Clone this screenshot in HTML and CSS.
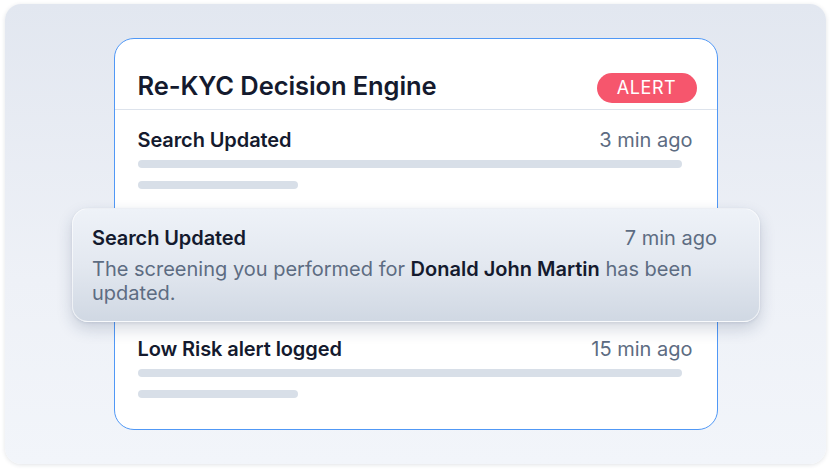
FILE: index.html
```html
<!DOCTYPE html>
<html lang="en">
<head>
<meta charset="utf-8">
<title>Re-KYC Decision Engine</title>
<link rel="stylesheet" href="styles.css">
</head>
<body>
<div class="panel">
  <div class="stage">
    <div class="card">
      <div class="card-header">
        <h1 class="card-title">Re-KYC Decision Engine</h1>
        <span class="badge">ALERT</span>
      </div>
      <div class="rows">
        <div class="row">
          <div class="row-top">
            <span class="row-title">Search Updated</span>
            <span class="row-time">3 min ago</span>
          </div>
          <div class="bar bar-long"></div>
          <div class="bar bar-short"></div>
        </div>
        <div class="row row-placeholder" aria-hidden="true">
          <div class="bar bar-long"></div>
          <div class="bar bar-short"></div>
        </div>
        <div class="row">
          <div class="row-top">
            <span class="row-title">Low Risk alert logged</span>
            <span class="row-time">15 min ago</span>
          </div>
          <div class="bar bar-long"></div>
          <div class="bar bar-short"></div>
        </div>
      </div>
    </div>
    <div class="toast">
      <div class="row-top">
        <span class="row-title">Search Updated</span>
        <span class="row-time">7 min ago</span>
      </div>
      <p class="toast-body">The screening you performed for <strong>Donald John Martin</strong> has been updated.</p>
    </div>
  </div>
</div>
</body>
</html>
```
FILE: styles.css
```css
* { box-sizing: border-box; }
html, body { margin: 0; padding: 0; background: #ffffff; }
body {
  font-family: Inter, "Noto Sans", "Liberation Sans", sans-serif;
  color: #141a2e;
  width: 832px;
  height: 472px;
  overflow: hidden;
}
.panel {
  margin: 4px 6px 0 5px;
  height: 460px;
  border-radius: 16px;
  background: linear-gradient(180deg, #e2e7f0 0%, #eef1f7 60%, #f2f5fa 100%);
  box-shadow: 0 1px 4px rgba(40, 55, 80, 0.14);
  padding-top: 34px;
}
.stage {
  position: relative;
  width: 604px;
  margin-left: 109px;
}
.card {
  background: #ffffff;
  border: 1.5px solid #5098f6;
  border-radius: 20px;
  height: 392px;
  overflow: hidden;
}
.card-header {
  height: 71px;
  display: flex;
  align-items: flex-end;
  justify-content: space-between;
  padding: 0 20.5px 6.5px 22.5px;
  border-bottom: 1px solid #dde3ec;
}
.card-title {
  margin: 0 0 2px;
  font-size: 25.5px;
  line-height: 30px;
  font-weight: 600;
  letter-spacing: -0.1px;
  color: #141a2e;
}
.badge {
  width: 100px;
  height: 30px;
  border-radius: 15px;
  background: #f6566d;
  color: #ffffff;
  font-size: 18px;
  font-weight: 400;
  letter-spacing: 0.6px;
  display: flex;
  align-items: center;
  justify-content: center;
}
.rows {
  display: flex;
  flex-direction: column;
  gap: 43px;
  padding: 17.5px 24.5px 0 22.5px;
}
.row-placeholder { padding-top: 32px; }
.row-top {
  display: flex;
  justify-content: space-between;
  align-items: center;
  height: 24px;
  margin-bottom: 8px;
}
.row-title {
  font-size: 20px;
  font-weight: 600;
  letter-spacing: -0.1px;
  color: #141a2e;
}
.row-time {
  font-size: 20px;
  font-weight: 400;
  color: #5d6c82;
}
.bar {
  height: 8.5px;
  border-radius: 4.25px;
  background: #d8dfe8;
}
.bar-long { width: 544px; margin-bottom: 12.5px; }
.bar-short { width: 160px; }
.toast {
  position: absolute;
  left: -42px;
  top: 170px;
  width: 688px;
  height: 114px;
  border-radius: 16px;
  padding: 17px 42px 0 19px;
  background: linear-gradient(180deg, #eef2f8 0%, #e3e8f0 50%, #d0d8e3 100%);
  border: 1px solid rgba(255, 255, 255, 0.6);
  box-shadow: 0 7px 16px rgba(30, 50, 90, 0.18), 0 1px 3px rgba(30, 50, 90, 0.1);
}
.toast .row-top { margin-bottom: 7px; }
.toast-body {
  margin: 0;
  font-size: 20px;
  line-height: 24px;
  color: #5d6c82;
}
.toast-body strong {
  font-weight: 600;
  color: #141a2e;
}
```
